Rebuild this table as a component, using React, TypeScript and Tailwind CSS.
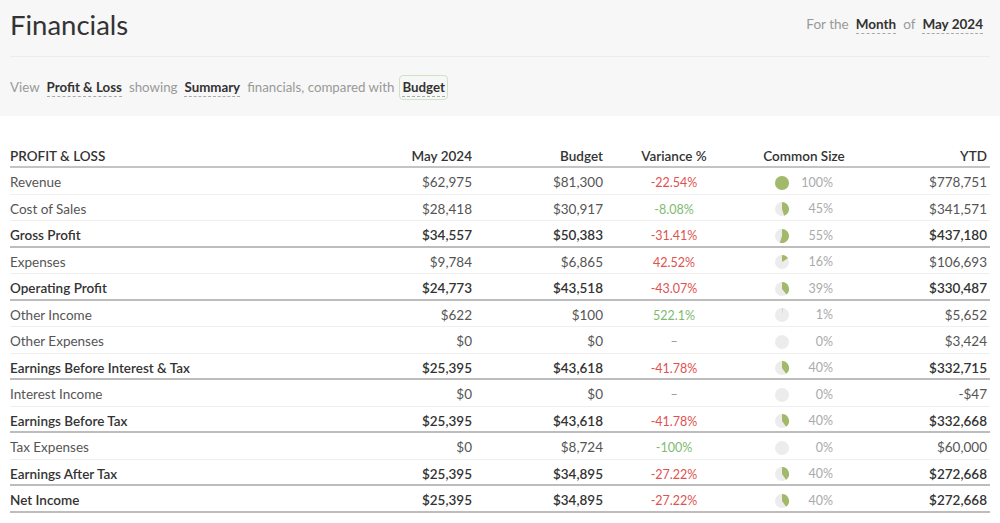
const rows = [
  { label: "Revenue", month: "$62,975", budget: "$81,300", variance: "-22.54%", tone: "red", pct: 100, ytd: "$778,751" },
  { label: "Cost of Sales", month: "$28,418", budget: "$30,917", variance: "-8.08%", tone: "green", pct: 45, ytd: "$341,571" },
  { label: "Gross Profit", month: "$34,557", budget: "$50,383", variance: "-31.41%", tone: "red", pct: 55, ytd: "$437,180", bold: true },
  { label: "Expenses", month: "$9,784", budget: "$6,865", variance: "42.52%", tone: "red", pct: 16, ytd: "$106,693" },
  { label: "Operating Profit", month: "$24,773", budget: "$43,518", variance: "-43.07%", tone: "red", pct: 39, ytd: "$330,487", bold: true },
  { label: "Other Income", month: "$622", budget: "$100", variance: "522.1%", tone: "green", pct: 1, ytd: "$5,652" },
  { label: "Other Expenses", month: "$0", budget: "$0", variance: "–", tone: "none", pct: 0, ytd: "$3,424" },
  { label: "Earnings Before Interest & Tax", month: "$25,395", budget: "$43,618", variance: "-41.78%", tone: "red", pct: 40, ytd: "$332,715", bold: true },
  { label: "Interest Income", month: "$0", budget: "$0", variance: "–", tone: "none", pct: 0, ytd: "-$47" },
  { label: "Earnings Before Tax", month: "$25,395", budget: "$43,618", variance: "-41.78%", tone: "red", pct: 40, ytd: "$332,668", bold: true },
  { label: "Tax Expenses", month: "$0", budget: "$8,724", variance: "-100%", tone: "green", pct: 0, ytd: "$60,000" },
  { label: "Earnings After Tax", month: "$25,395", budget: "$34,895", variance: "-27.22%", tone: "red", pct: 40, ytd: "$272,668", bold: true },
  { label: "Net Income", month: "$25,395", budget: "$34,895", variance: "-27.22%", tone: "red", pct: 40, ytd: "$272,668", bold: true },
];

const cols = "grid grid-cols-[330px_132px_131px_142px_118px_124px]";

function Pie({ pct }: { pct: number }) {
  const r = 7;
  let wedge = null;
  if (pct >= 100) {
    wedge = <circle cx="7" cy="7" r={r} fill="#a2b96b" />;
  } else if (pct > 0) {
    const a = (pct / 100) * Math.PI * 2;
    const x = 7 + r * Math.sin(a);
    const y = 7 - r * Math.cos(a);
    const large = pct > 50 ? 1 : 0;
    wedge = <path d={`M7 7 L7 0 A${r} ${r} 0 ${large} 1 ${x} ${y} Z`} fill="#a2b96b" />;
  }
  return (
    <svg width="14" height="14" viewBox="0 0 14 14" className="self-center">
      <circle cx="7" cy="7" r={r} fill="#ececec" />
      {wedge}
    </svg>
  );
}

function Pick({ children, boxed }: { children: React.ReactNode; boxed?: boolean }) {
  return (
    <span
      className={
        boxed
          ? "mx-[5px] rounded-[4px] border border-[#cfe3c4] px-[2px] py-[2px] font-bold text-[#333]"
          : "mx-[7px] font-bold text-[#333]"
      }
    >
      <span className="border-b border-dashed border-[#aaa] pb-[1px]">{children}</span>
    </span>
  );
}

export default function App() {
  return (
    <div className="min-h-[523px] bg-white font-['Lato','Open_Sans',sans-serif] text-[#444]">
      {/* Header */}
      <div className="h-[116px] bg-[#f7f7f7] px-[10px]">
        <div className="flex h-[57px] items-center justify-between border-b border-[#ececec] pb-[7px]">
          <h1 className="text-[27.5px] font-normal text-[#333]">Financials</h1>
          <div className="flex items-center text-[13.5px] text-[#999]">
            For the
            <Pick>Month</Pick>
            of
            <Pick>May 2024</Pick>
          </div>
        </div>
        <div className="flex h-[59px] items-center pt-[2px] text-[13.3px] text-[#999]">
          View
          <Pick>Profit &amp; Loss</Pick>
          showing
          <Pick>Summary</Pick>
          financials, compared with
          <Pick boxed>Budget</Pick>
        </div>
      </div>

      {/* Table */}
      <div className="px-[10px] pt-[29px] text-[13.5px] leading-[20px]">
        <div className={`${cols} h-[23px] items-center border-b-2 border-[#c4c4c4] font-semibold text-[#333]`}>
          <div>PROFIT &amp; LOSS</div>
          <div className="text-right">May 2024</div>
          <div className="text-right">Budget</div>
          <div className="text-center">Variance %</div>
          <div className="text-center">Common Size</div>
          <div className="text-right">YTD</div>
        </div>
        {rows.map((r) => (
          <div
            key={r.label}
            className={`${cols} h-[26.5px] items-baseline pt-[4px] ${
              r.bold ? "border-b-2 border-[#bdbdbd] font-semibold text-[#333]" : "border-b border-[#efefef] text-[#555]"
            }`}
          >
            <div>{r.label}</div>
            <div className="text-right">{r.month}</div>
            <div className="text-right">{r.budget}</div>
            <div
              className={`text-center text-[12.5px] font-normal ${
                r.tone === "red" ? "text-[#e0524f]" : r.tone === "green" ? "text-[#7dbb70]" : "text-[#999]"
              }`}
            >
              {r.variance}
            </div>
            <div className="flex items-baseline justify-between self-center px-[30px]">
              <Pie pct={r.pct} />
              <span className="text-[12.5px] font-normal text-[#aaa]">{r.pct}%</span>
            </div>
            <div className="text-right">{r.ytd}</div>
          </div>
        ))}
      </div>
    </div>
  );
}
